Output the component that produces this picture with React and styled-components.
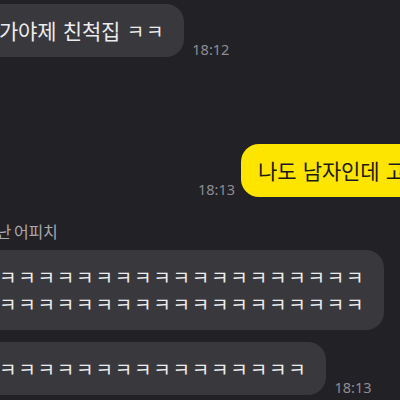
import React from "react";
import styled, { createGlobalStyle } from "styled-components";

const GlobalStyle = createGlobalStyle`
  html, body {
    margin: 0;
    padding: 0;
    background-color: #222126;
  }
  body {
    font-family: "Noto Sans CJK KR", "Noto Sans", sans-serif;
  }
`;

const Screen = styled.div`
  width: 400px;
  height: 400px;
  overflow: hidden;
  background-color: #222126;
`;

const Chat = styled.div`
  display: flex;
  flex-direction: column;
  align-items: flex-start;
  margin-left: -18px;
  width: 440px;
  padding-top: 4px;
`;

const Row = styled.div`
  display: flex;
  align-items: flex-end;
  gap: ${(props) => props.gap || 8}px;
  margin-top: ${(props) => props.top || 0}px;
  padding-left: ${(props) => props.indent || 0}px;
`;

const Group = styled.div`
  display: flex;
  flex-direction: column;
  align-items: flex-start;
  margin-top: ${(props) => props.top || 0}px;
`;

const Name = styled.div`
  font-size: 16px;
  line-height: 20px;
  letter-spacing: -0.3px;
  color: #a9a8ae;
  margin-bottom: 9px;
`;

const Bubble = styled.div`
  flex-shrink: 0;
  box-sizing: border-box;
  padding: 13px 19px 13px 17px;
  border-radius: 18px;
  font-size: 21px;
  line-height: 27px;
  letter-spacing: -0.2px;
  word-spacing: 2px;
  white-space: nowrap;
  background-color: ${(props) => (props.mine ? "#fee500" : "#39383d")};
  color: ${(props) => (props.mine ? "#1a1a1a" : "#ececee")};
`;

const Laugh = styled.span`
  display: ${(props) => (props.line ? "block" : "inline")};
  font-size: 19px;
  letter-spacing: 1.8px;
`;

const Time = styled.span`
  flex-shrink: 0;
  font-family: "Noto Sans", sans-serif;
  font-size: 14.5px;
  line-height: 14px;
  margin-bottom: 1px;
  color: #8e8d93;
`;

const laugh = (n) => "ㅋ".repeat(n);

export default function App() {
  return (
    <Screen>
      <GlobalStyle />
      <Chat>
        <Row>
          <Bubble>
            가야제 친척집 <Laugh>{laugh(2)}</Laugh>
          </Bubble>
          <Time>18:12</Time>
        </Row>

        <Row top={87} indent={216} gap={6}>
          <Time>18:13</Time>
          <Bubble mine>나도 남자인데 고민이네</Bubble>
        </Row>

        <Group top={24}>
          <Name>장난 어피치</Name>
          <Bubble>
            <Laugh line>{laugh(19)}</Laugh>
            <Laugh line>{laugh(19)}</Laugh>
          </Bubble>
          <Row top={12}>
            <Bubble>
              <Laugh>{laugh(16)}</Laugh>
            </Bubble>
            <Time>18:13</Time>
          </Row>
        </Group>
      </Chat>
    </Screen>
  );
}
